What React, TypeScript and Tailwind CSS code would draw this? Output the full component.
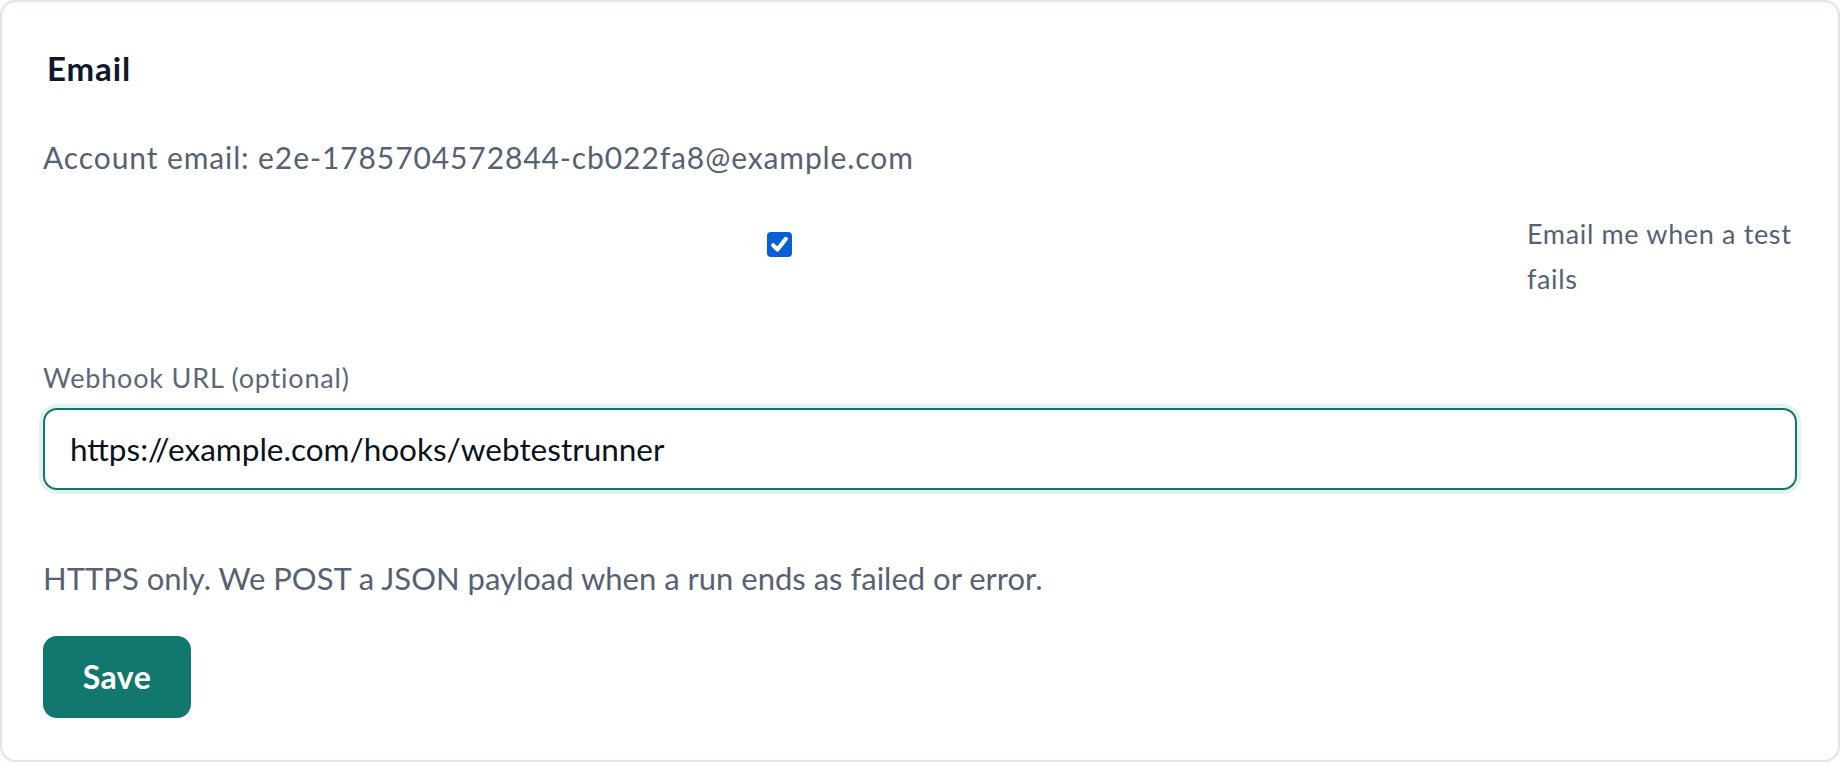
import { useState } from "react";

/* ---------- NOTIFICATION SETTINGS CARD ---------- */

export default function App() {
  const [notify, setNotify] = useState(true);
  const [url, setUrl] = useState("https://example.com/hooks/webtestrunner");

  return (
    <div className="w-[1840px] h-[762px] bg-white font-['Lato',sans-serif]">
      <section className="h-[762px] rounded-[16px] border-2 border-[#dfe5ee] shadow-[0_0_2px_rgba(148,163,184,0.35)] px-[41px] pt-[46px]">
        <h2 className="pl-[4px] text-[33px] leading-[40px] font-bold tracking-[0.9px] text-[#0f172a]">Email</h2>

        <p className="mt-[49px] text-[30px] leading-[40px] tracking-[0.9px] text-[#566173]">
          Account email: e2e-1785704572844-cb022fa8@example.com
        </p>

        {/* CHECKBOX ROW */}
        <label className="mt-[34px] flex gap-3 cursor-pointer">
          <div className="flex-1 flex justify-center pt-[21px]">
            <button
              type="button"
              onClick={() => setNotify(!notify)}
              className={`w-[25px] h-[25px] rounded-[4px] flex items-center justify-center ${
                notify ? "bg-[#0b5dd3]" : "bg-white border-2 border-[#767676]"
              }`}
            >
              {notify && (
                <svg viewBox="0 0 16 16" className="w-[21px] h-[21px]">
                  <path
                    d="M3.2 8.6 6.4 11.8 12.8 3.8"
                    fill="none"
                    stroke="white"
                    strokeWidth="3.2"
                    strokeLinecap="round"
                    strokeLinejoin="round"
                  />
                </svg>
              )}
            </button>
          </div>
          <span className="w-[270px] text-[27px] leading-[45px] tracking-[0.65px] text-[#566173]">
            Email me when a test fails
          </span>
        </label>

        {/* WEBHOOK */}
        <div className="mt-[59px] text-[27px] leading-[36px] tracking-[0.8px] text-[#5c6778]">
          Webhook URL (optional)
        </div>
        <input
          value={url}
          onChange={(e) => setUrl(e.target.value)}
          className="mt-[12px] block w-full h-[82px] rounded-[14px] border-2 border-[#0f766e] ring-4 ring-[#e4f1ef] px-[25px] text-[31.5px] text-[#0b1220] outline-none"
        />

        <p className="mt-[68px] text-[31px] leading-[40px] text-[#566173]">
          HTTPS only. We POST a JSON payload when a run ends as failed or error.
        </p>

        <button className="mt-[38px] w-[148px] h-[82px] rounded-[14px] bg-[#12776d] text-white text-[32px] font-bold tracking-[0.5px]">
          Save
        </button>
      </section>
    </div>
  );
}
